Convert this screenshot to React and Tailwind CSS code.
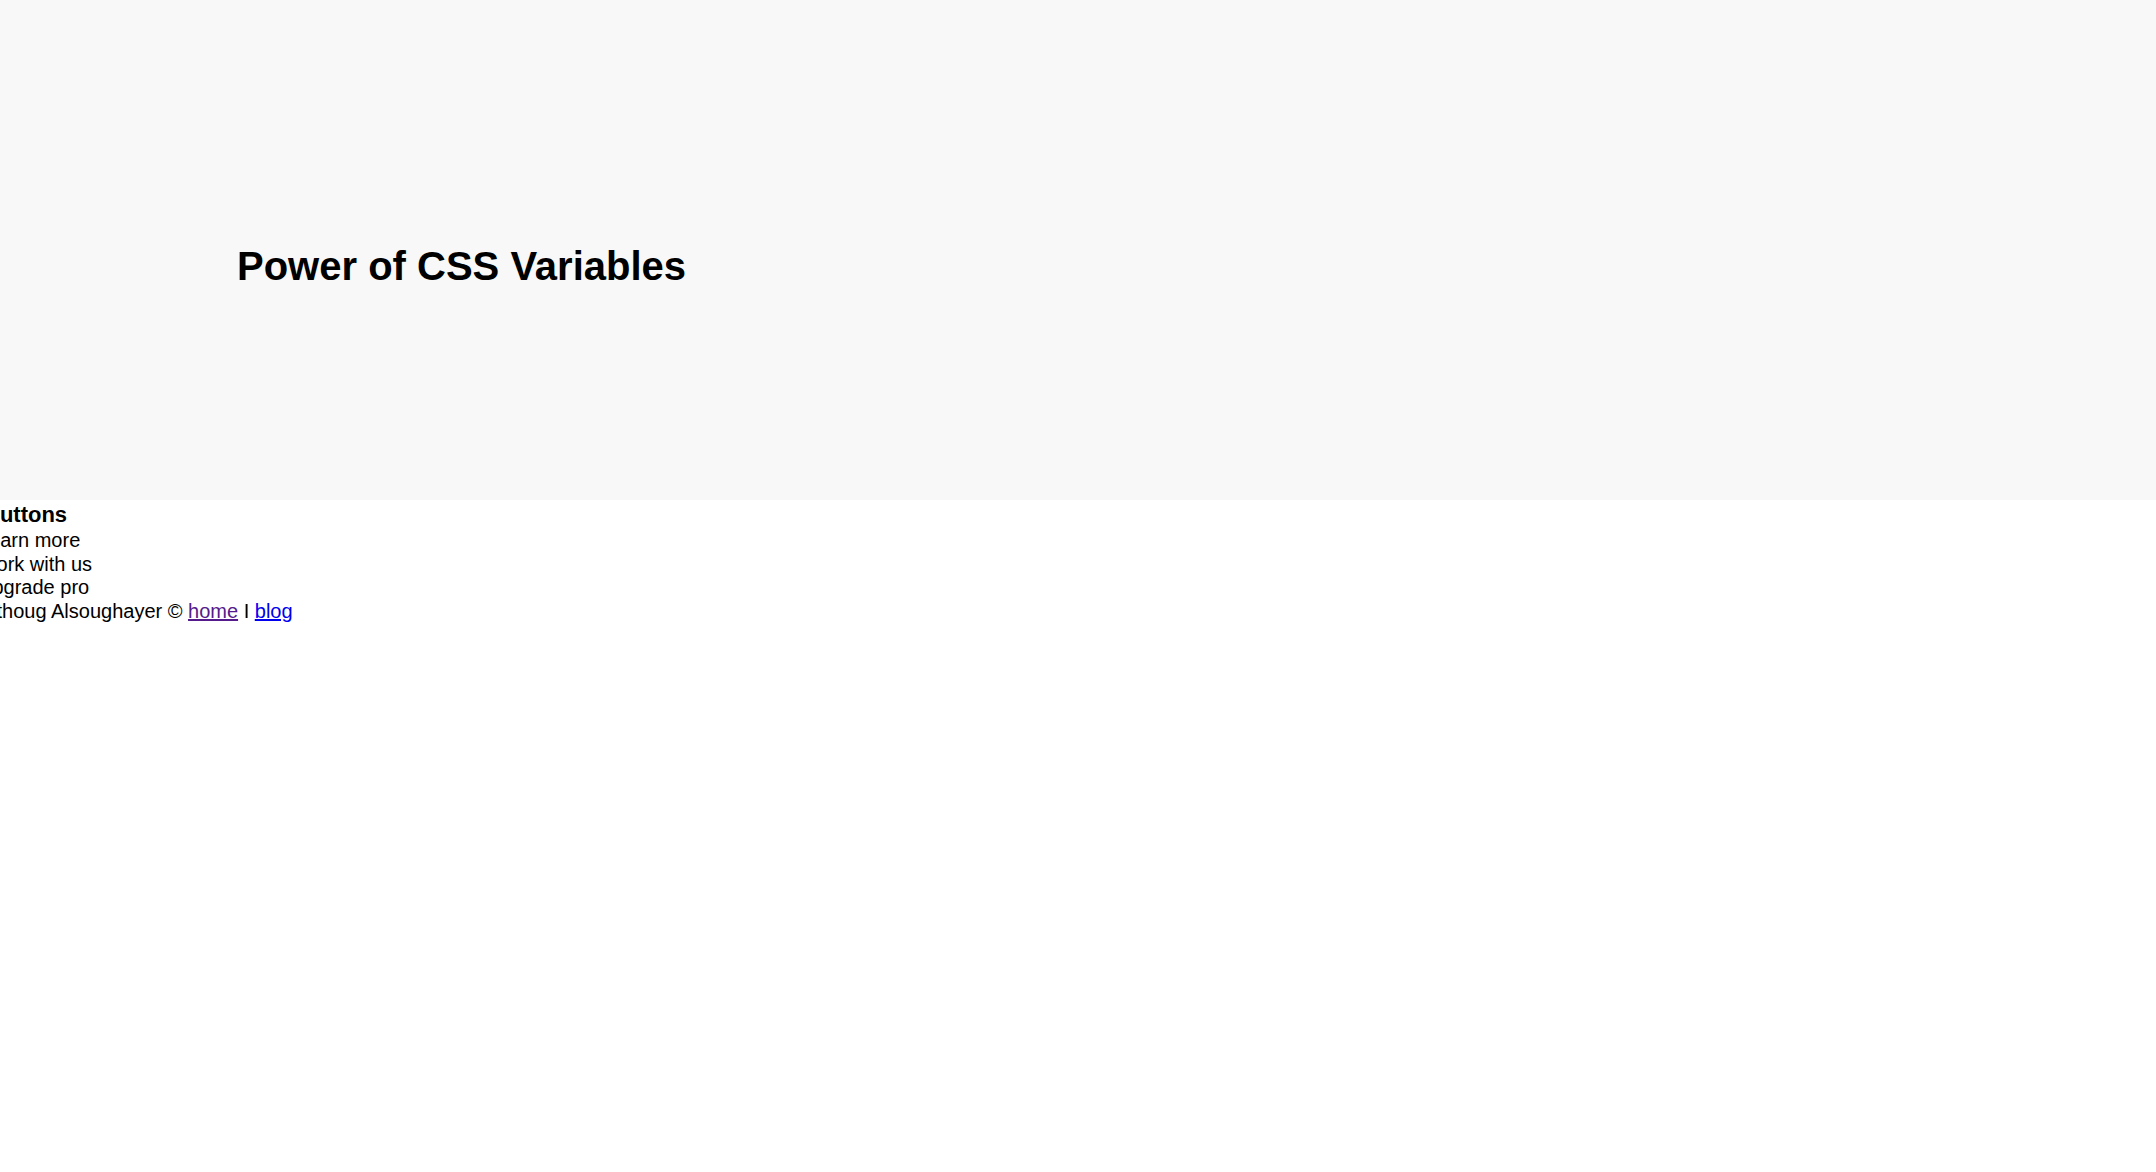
const BUTTONS = ['Learn more', 'Work with us', 'Upgrade pro'];

function App() {
  return (
    <div className="min-h-screen bg-white text-black font-['Liberation_Sans',Arial,sans-serif]">
      {/* Header */}
      <header className="h-[500px] bg-[#f8f8f8] pl-[237px] pt-[246px]">
        <h1 className="text-[40px] leading-[40px] font-bold">Power of CSS Variables</h1>
      </header>

      {/* Buttons list (unstyled, overflowing left edge) */}
      <section className="overflow-hidden">
        <h3 className="ml-[-16px] text-[22px] leading-[29px] font-bold whitespace-nowrap">Buttons</h3>
        <div className="ml-[-22px] text-[20px] leading-[23.5px]">
          {BUTTONS.map((label) => (
            <div key={label} className="whitespace-nowrap">
              {label}
            </div>
          ))}
        </div>
      </section>

      {/* Footer */}
      <footer className="overflow-hidden text-[20px] leading-[23.5px] whitespace-nowrap">
        <p className="ml-[-3.5px]">
          thoug Alsoughayer © <a href="#" className="text-[#551a8b] underline">home</a> I{' '}
          <a href="#" className="text-[#0000ee] underline">blog</a>
        </p>
      </footer>
    </div>
  );
}

export default App;
